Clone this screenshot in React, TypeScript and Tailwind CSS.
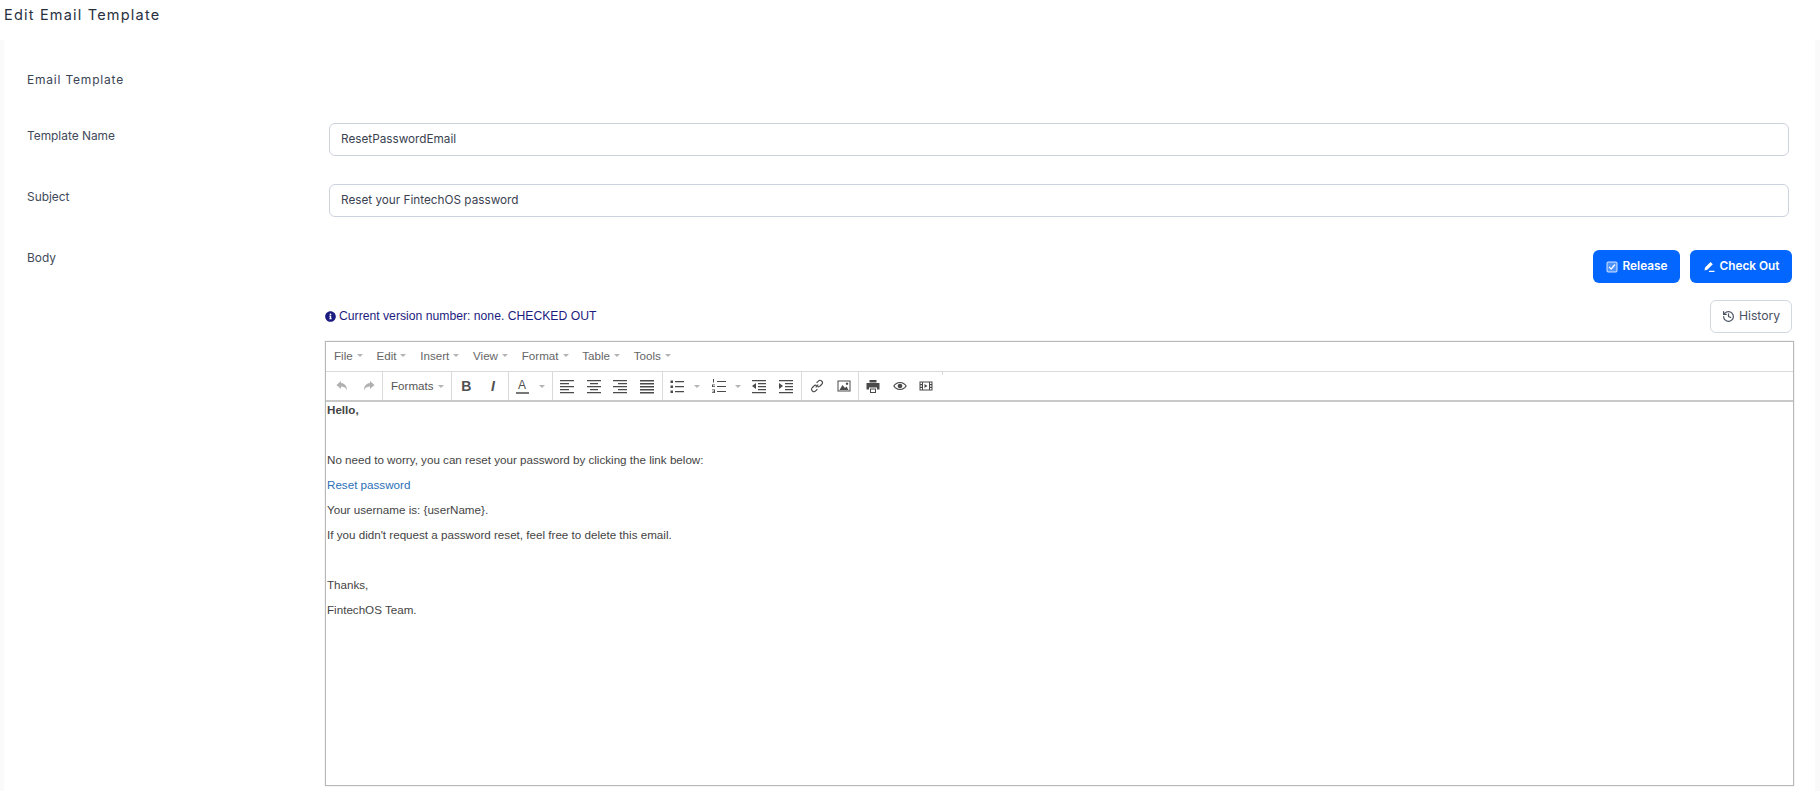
import { FaInfoCircle } from "react-icons/fa";
import { History } from "lucide-react";

const sans = "font-['Inter',sans-serif]";

function Caret() {
  return <span className="ml-[4px] inline-block h-0 w-0 border-x-[3px] border-t-[3px] border-x-transparent border-t-[#b4b4b4]" />;
}

function Ico({ d, className = "" }: { d: string; className?: string }) {
  return (
    <svg viewBox="0 0 16 16" className={`h-4 w-4 fill-[#4a4a4a] ${className}`}>
      <path d={d} fillRule="evenodd" />
    </svg>
  );
}

const icons = {
  undo: "M7 3 2.500 7 7 11V8.500c3 0 5 1 6 4 .2-4-2-7-6-7.500V3z",
  redo: "M9 3l4.500 4L9 11V8.500c-3 0-5 1-6 4-.2-4 2-7 6-7.500V3z",
  left: "M1 2h14v1.300H1zM1 5h9v1.300H1zM1 8h14v1.300H1zM1 11h9v1.300H1zM1 14h14v1.300H1z",
  center: "M1 2h14v1.300H1zM4 5h8v1.300H4zM1 8h14v1.300H1zM4 11h8v1.300H4zM1 14h14v1.300H1z",
  right: "M1 2h14v1.300H1zM6 5h9v1.300H6zM1 8h14v1.300H1zM6 11h9v1.300H6zM1 14h14v1.300H1z",
  justify: "M1 2h14v1.500H1zM1 5h14v1.500H1zM1 8h14v1.500H1zM1 11h14v1.500H1zM1 14h14v1.500H1z",
  bullet: "M6 3h9v1.200H6zM6 8h9v1.200H6zM6 13h9v1.200H6zM1.500 2.500h2.500V5H1.500zM1.500 7.500h2.500V10H1.500zM1.500 12.500h2.500V15H1.500z",
  number: "M6 3h9v1H6zM6 8h9v1H6zM6 13h9v1H6zM2 1h1v3.500H2zM1 6.500h3v.8H2v1h2v.8H1zM1 11.500h3v3.500H1v-.8h2v-.6H1.500v-.7H3v-.6H1z",
  outdent: "M1 2h14v1.300H1zM7 5h8v1.300H7zM7 8h8v1.300H7zM7 11h8v1.300H7zM1 14h14v1.300H1zM5 5v6L1 8z",
  indent: "M1 2h14v1.300H1zM7 5h8v1.300H7zM7 8h8v1.300H7zM7 11h8v1.300H7zM1 14h14v1.300H1zM1 5v6l4-3z",
  image: "M1.500 2.500h13v11h-13zM2.500 3.500v9h11v-9zM3.500 12l3-5 2.500 3 1.500-1.500 2 3.500zM11 4.500a1.200 1.200 0 1 0 .01 0z",
  print: "M4.500 2h7v2.500h-7zM1.500 5h13v6.500h-2.500V9.500H4v2H1.500zM5 10.500h6V15H5zM6 11.500v2.500h4v-2.500z",
  preview: "M8 4C4.800 4 2.300 6.200 1.200 8 2.300 9.800 4.800 12 8 12s5.700-2.200 6.800-4C13.700 6.200 11.200 4 8 4zM8 5c2.400 0 4.300 1.400 5.400 3-1.100 1.600-3 3-5.400 3S3.700 9.600 2.600 8C3.700 6.400 5.600 5 8 5zM8 5.700a2.300 2.300 0 1 1-.01 0z",
  media: "M1.500 3.500h13v9h-13zM2.500 4.500v1.500h1.500V4.500zM2.500 7.200v1.600h1.500V7.200zM2.500 10v1.500h1.500V10zM12 4.500v1.500h1.500V4.500zM12 7.200v1.600h1.500V7.200zM12 10v1.500h1.500V10zM5 4.500v7h6v-7zM6.500 6 9.500 8l-3 2z",
};

function Btn({ d, className = "" }: { d: string; className?: string }) {
  return (
    <span className="flex w-[26.6px] items-center justify-center">
      <Ico d={d} className={className} />
    </span>
  );
}

function Sep() {
  return <span className="h-full w-px bg-[#d9d9d9]" />;
}

function LinkIcon() {
  return (
    <svg viewBox="0 0 16 16" className="h-[14px] w-[14px] fill-none stroke-[#4a4a4a] stroke-[1.3]">
      <path d="M6.500 9.500 9.500 6.500M7.500 4.500l2-2a2.300 2.300 0 0 1 4 3.500l-2 2a2.300 2.300 0 0 1-3 .5M8.500 11.500l-2 2a2.300 2.300 0 0 1-4-3.500l2-2a2.300 2.300 0 0 1 3-.5" />
    </svg>
  );
}

function Toolbar() {
  return (
    <div className="flex h-[30px] items-center border-b-2 border-[#c9c9c9] pl-[3px] font-['Liberation_Sans',sans-serif]">
      <div className="flex h-full w-[53px] items-center">
        <Btn d={icons.undo} className="fill-[#b0b0b0]" />
        <Btn d={icons.redo} className="fill-[#b0b0b0]" />
      </div>
      <Sep />
      <div className="flex h-full w-[68px] items-center pl-[8px] text-[11.600px] text-[#555]">
        Formats
        <Caret />
      </div>
      <Sep />
      <div className="flex h-full w-[56px] items-center pl-[1px]">
        <span className="flex w-[26.6px] justify-center text-[14px] leading-none font-bold text-[#505050]">B</span>
        <span className="flex w-[26.6px] justify-center text-[14px] leading-none font-bold text-[#505050] italic">I</span>
      </div>
      <Sep />
      <div className="flex h-full w-[43px] items-center pl-[5px]">
        <span className="flex w-[16px] flex-col items-center">
          <span className="text-[12px] leading-[12px] text-[#505050]">A</span>
          <span className="mt-[1px] h-[2px] w-[13px] bg-[#777]" />
        </span>
        <span className="ml-[5px] flex">
          <Caret />
        </span>
      </div>
      <Sep />
      <div className="flex h-full w-[109px] items-center pl-[1px]">
        <Btn d={icons.left} />
        <Btn d={icons.center} />
        <Btn d={icons.right} />
        <Btn d={icons.justify} />
      </div>
      <Sep />
      <div className="flex h-full w-[138px] items-center pl-[6px]">
        <Ico d={icons.bullet} />
        <span className="ml-[5px] flex">
          <Caret />
        </span>
        <span className="ml-[11px]">
          <Ico d={icons.number} />
        </span>
        <span className="ml-[4px] flex">
          <Caret />
        </span>
        <span className="ml-[5px] flex">
          <Btn d={icons.outdent} />
          <Btn d={icons.indent} />
        </span>
      </div>
      <Sep />
      <div className="flex h-full w-[56px] items-center pl-[2px]">
        <span className="flex w-[26.6px] justify-center">
          <LinkIcon />
        </span>
        <Btn d={icons.image} />
      </div>
      <Sep />
      <div className="flex h-full w-[83px] items-center pl-[1px]">
        <Btn d={icons.print} />
        <Btn d={icons.preview} />
        <Btn d={icons.media} />
      </div>
      <span className="h-[3px] w-px self-start bg-[#d9d9d9]" />
    </div>
  );
}

const menus = ["File", "Edit", "Insert", "View", "Format", "Table", "Tools"];

function Editor() {
  return (
    <div className="mr-[-2px] h-[445px] border border-[#b8b8b8] bg-white shadow-[0_0_1px_#bbbbbb]">
      <div className="flex h-[30px] items-center gap-[13.800px] border-b border-[#d9d9d9] pb-[1px] pl-[8px] font-['Liberation_Sans',sans-serif] text-[11.600px] text-[#666]">
        {menus.map((m) => (
          <span key={m} className="flex items-center">
            {m}
            <Caret />
          </span>
        ))}
      </div>
      <Toolbar />
      <div className="pl-[1px] font-['Liberation_Sans',sans-serif] text-[11.630px] leading-[25px] text-[#444]">
        <p className="-mt-[5px] font-bold">Hello,</p>
        <p>&nbsp;</p>
        <p>No need to worry, you can reset your password by clicking the link below:</p>
        <p className="text-[#2a70b8]">Reset password</p>
        <p>Your username is: {"{userName}"}.</p>
        <p>If you didn't request a password reset, feel free to delete this email.</p>
        <p>&nbsp;</p>
        <p>Thanks,</p>
        <p>FintechOS Team.</p>
      </div>
    </div>
  );
}

function Field({ label, value, className = "" }: { label: string; value: string; className?: string }) {
  return (
    <div className={`flex h-[61px] ${className}`}>
      <div className="w-[302px] pt-[3px] text-[11.900px] leading-[20px] text-[#3f4a5a]">{label}</div>
      <div className="flex h-[33px] w-[1460px] items-center rounded-md border border-[#ced2dd] bg-white pt-[1px] pl-[11px] text-[11.750px] text-[#3a4250]">
        {value}
      </div>
    </div>
  );
}

function ReleaseIcon() {
  return (
    <svg viewBox="0 0 12 12" className="h-3 w-3 fill-none">
      <rect x="1" y="1" width="10" height="10" rx="1" className="fill-white/30 stroke-white/80" />
      <path d="M3 5.800 5.200 8 9 3.500" className="stroke-white stroke-[1.2]" />
    </svg>
  );
}

function CheckOutIcon() {
  return (
    <svg viewBox="0 0 12 12" className="h-3 w-3 fill-white">
      <path d="M7.500 1 9.800 3.300 4.300 8.800 1.500 9.500 2 6.500zM6 9.700h5.500V11H6z" />
    </svg>
  );
}

export default function App() {
  return (
    <div className={`h-[791px] overflow-hidden bg-[#fafafa] ${sans}`}>
      <div className="h-[40px] bg-white pt-[5px] pl-[4px] text-[14.500px] leading-[20px] tracking-[1.200px] text-[#28303f]">Edit Email Template</div>
      <div className="mr-[5px] ml-[4px] h-[751px] bg-white pt-[30px] pl-[23px]">
        <div className="h-[53px] text-[12px] leading-[20px] tracking-[0.8px] text-[#3a4454]">Email Template</div>
        <Field label="Template Name" value="ResetPasswordEmail" />
        <Field label="Subject" value="Reset your FintechOS password" className="mb-[5px]" />
        <div className="flex">
          <div className="-mt-[2px] w-[298px] text-[11.900px] leading-[20px] text-[#3f4a5a]">Body</div>
          <div className="w-[1467px]">
            <div className="flex h-[50px] justify-end gap-[10px]">
              <button className="flex h-[33px] w-[87px] items-center justify-center gap-[5px] rounded-md bg-[#0366fe] text-[11.800px] font-semibold text-white">
                <ReleaseIcon />
                Release
              </button>
              <button className="flex h-[33px] w-[102px] items-center justify-center gap-[5px] rounded-md bg-[#0366fe] text-[11.800px] font-semibold text-white">
                <CheckOutIcon />
                Check Out
              </button>
            </div>
            <div className="flex h-[41px] items-start justify-between">
              <div className="flex h-[33px] items-center gap-[3px] font-['Liberation_Sans',sans-serif] text-[12.200px] text-[#1c1c80]">
                <FaInfoCircle size={11} />
                Current version number: none. CHECKED OUT
              </div>
              <button className="flex h-[33px] w-[82px] items-center justify-center gap-[4px] rounded-md border border-[#d3d7e0] bg-white text-[12.200px] text-[#4a5262]">
                <History size={13} strokeWidth={2.2} />
                History
              </button>
            </div>
            <Editor />
          </div>
        </div>
      </div>
    </div>
  );
}
